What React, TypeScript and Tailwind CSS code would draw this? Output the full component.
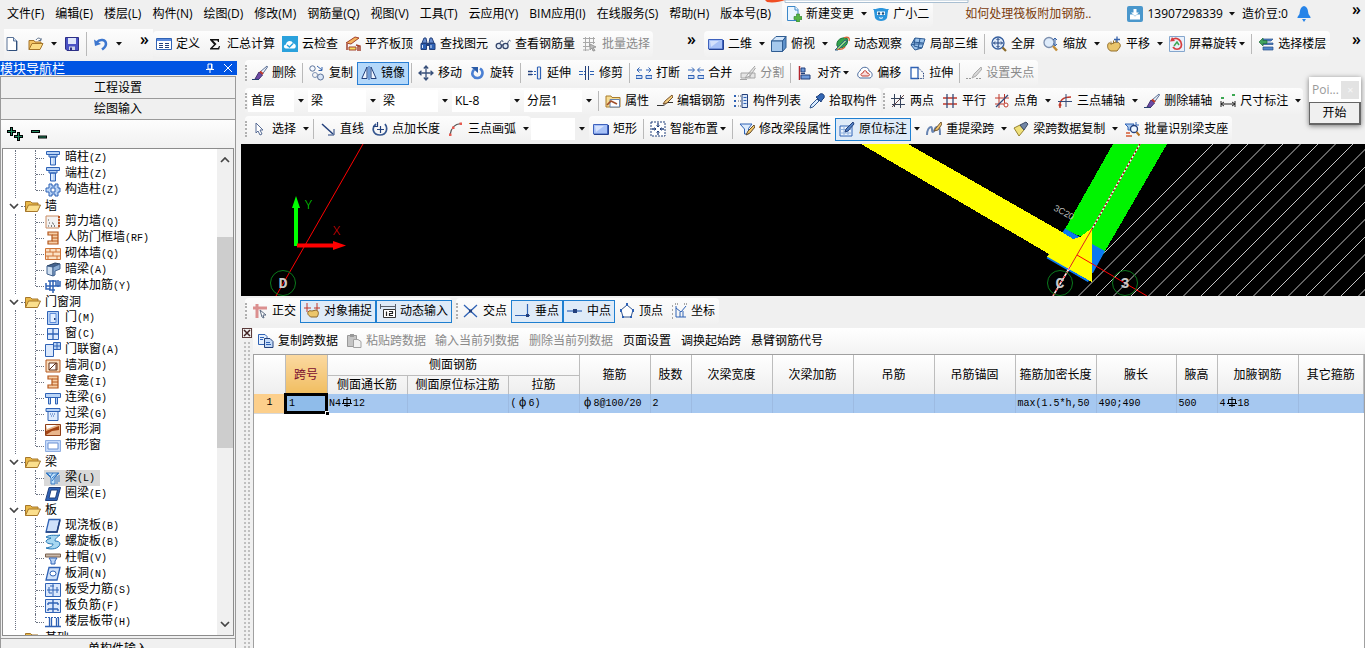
import type { ReactNode } from 'react';
import clsx from 'clsx';

const BLUE = '#2f62b5';
const NAVY = '#23407c';
const LIGHT = '#b9d4f7';
const RED = '#c0392b';

const shapes = {
  file: <><path d="M3 1.500h6.500L13 5v9.500H3z" fill="#fff" stroke="#5b7396" /><path d="M9.500 1.500V5H13" fill="#cfe0f5" stroke="#5b7396" /><path d="M12.500 5v9.500H5" fill="none" stroke="#2f4f7c" /></>,
  open: <><path d="M1 13.500v-9h5l1 1.500h6v2" fill="#f4c566" stroke="#a5752a" /><path d="M1 13.500 4 7.500h11l-3 6z" fill="#fbdc85" stroke="#a5752a" /><path d="M8 4c2-3 4-2 5 0m0-2v2.500h-2.500" fill="none" stroke="#5a6e8a" /></>,
  save: <><path d="M1.500 1.500h13v13H3L1.500 13z" fill="#4a52c4" stroke="#2c2f86" /><path d="M4 2h8v6H4z" fill="#dfe6fa" /><path d="M5 10.500h6V14H5z" fill="#ccd3e8" /><path d="M6 11.500h2V14H6z" fill="#2c2f86" /></>,
  undo: <><path d="M3.500 6.500C7 2.500 13 3.500 13 8c0 3-2 4-4 5.500" fill="none" stroke="#3d77cf" strokeWidth="2.500" /><path d="M1 3.500 2 10l6-2z" fill="#3d77cf" /></>,
  define: <><path d="M.5 2.500h15v11H.5z" fill="#fff" stroke={BLUE} /><path d="M1 3h14v2H1z" fill="#5b8add" /><path d="M3 7.500h4m-4 2h4m-4 2h4M9 7.500h4m-4 2h4m-4 2h4" stroke={NAVY} /></>,
  sigma: <path d="M3 3h9v3h-1l-.7-1.500H6L9.500 8l-4 4H11l1-2h1l-.8 3.500H3v-1L7 8.500 3 4z" fill="#111" />,
  cloudCheck: <><rect width="16" height="16" fill="#2aa1dc" /><path d="M4 12.500c-3-.5-2.500-4 0-4 0-4 6-5 7-1 3-.5 4 4.500 1 5z" fill="#fff" /><path d="m5 9 2.500 2L11 7.500" fill="none" stroke="#2aa1dc" strokeWidth="1.500" /></>,
  slab: <><path d="m1 7 9-6 4 1-8 6z" fill="#f3b25c" stroke="#a3402c" /><path d="M4 11h7v3H4z" fill="#f6dc5c" stroke="#a3402c" /><path d="M2 8v6m9-5 4 1v5m-2-5v5" fill="none" stroke="#a3402c" strokeWidth="1.500" /></>,
  find: <><path d="M2 7 4 2h2l1 5zm7 0 1-5h2l2 5z" fill="#6b8fd0" stroke={NAVY} /><path d="M1 7.500h5.500v6H1zm8.500 0H15v6H9.500z" fill={BLUE} stroke={NAVY} /><path d="M6.500 7h3v3h-3z" fill={NAVY} /><path d="M2.500 9v3m8.500-3v3" stroke="#dfe9fa" /></>,
  glasses: <><circle cx="3.800" cy="10" r="2.600" fill="#e2ebf6" stroke="#33446a" strokeWidth="1.300" /><circle cx="10.500" cy="10" r="2.600" fill="#e2ebf6" stroke="#33446a" strokeWidth="1.300" /><path d="M6 9h2M5 7c1-3 3-3 3-1m4.500 2C13 6 14 3 15.500 5" fill="none" stroke="#33446a" /></>,
  batch: <><path d="M1 2.500h12M1 6.500h12M1 10.500h8M1 14h6M3.500 1v14M7.500 1v10M11.500 1v7" stroke="#a9a9a9" /><path d="m8 8 6 3-3 .5 2 3-2 .5-1-3-2 2z" fill="#bdbdbd" stroke="#999" /></>,
  rect: <><path d="M.5 3.500h14v9.500H.5z" fill="#a7c1f7" stroke="#3f62bd" /><path d="M1 13.500h14.500V4" fill="none" stroke="#244191" /><path d="M2 5h9L3 11z" fill="#d4e1fc" /></>,
  cube: <><path d="M.5 5 5 .5h10L11.500 5z" fill="#d5e7fa" stroke="#2f5c92" /><path d="M.5 5h11v10.500H.5z" fill="#a5c8ec" stroke="#2f5c92" /><path d="M11.500 5 15 .5v11l-3.500 4z" fill="#5d90c9" stroke="#2f5c92" /></>,
  orbit: <><path d="M3 10C2 4 7 1 13 2c2 6-2 10-7 10z" fill="#35a34d" stroke="#19733a" /><path d="M1 14 11 4l2 1-9 9z" fill="#8fdc78" stroke="#2e5e88" /><path d="M10 2c4-2 6 0 5 3M3 13c3 1 6 0 8-2" fill="none" stroke="#db6436" strokeWidth="1.300" /></>,
  local3d: <><path d="m1 9 4-7 10 1-3 9-7 2z" fill="#9bc3ec" stroke="#2b5992" /><path d="m3 6 10 1M5 2l-1 8 8 2M10 2.500 8 13M1 9l4-1 8 0" fill="none" stroke="#2b5992" /></>,
  full: <><circle cx="7" cy="7" r="6" fill="#dfecfb" stroke="#365e9e" strokeWidth="1.300" /><path d="M7 2.500v9M2.500 7h9M5.500 4 7 2.500 8.500 4m-3 6L7 11.500 8.500 10M4 5.500 2.500 7 4 8.500m6-3L11.500 7 10 8.500" fill="none" stroke="#1d3f7c" /><path d="m11.500 11.500 3.500 3.500" stroke="#8a6a2b" strokeWidth="2.200" /></>,
  zoom: <><circle cx="6" cy="6.500" r="5" fill="#deebfa" stroke="#7c8fae" strokeWidth="1.300" /><path d="m10 10 4 4.500" stroke="#c28c36" strokeWidth="2.500" /><path d="M12 2v5m-2-3 2-2 2 2m-2 3v2m-1.500-1.500L12 10l2-2" fill="none" stroke="#3462a8" /></>,
  pan: <><path d="M2 8c1-2 2-1 3 0l5-2c3 0 5 2 4 5l-3 4H5c-3-1-4-4-3-7z" fill="#eac56b" stroke="#94702e" /><path d="M5 8.500v-3m2.500 2v-3m2.500 2V4" stroke="#94702e" /><path d="M11 .5v6M8 3.500h6" stroke="#3763ab" strokeWidth="1.300" /></>,
  rotateScreen: <><path d="M.5.500h15v15H.5z" fill="#e9f0fa" stroke="#84a6cd" /><path d="M3 4c5-4 11 1 9 7-2 3-6 3-8 0" fill="none" stroke="#d73c3c" strokeWidth="1.700" /><path d="M1 5.500 3 1l3 4z" fill="#d73c3c" /><path d="m5 10 3-4 2 3" fill="none" stroke="#3ba751" strokeWidth="1.500" /></>,
  floors: <><path d="M5 3h10l-2 2H4zm0 4h10v1.500H5zm0 4h10v3H5z" fill="#5286c9" stroke="#274d87" strokeWidth=".7" /><path d="m1 6 4-4v2.500h4v3H5V10z" fill="#41a35d" stroke="#1e6c3a" strokeWidth=".7" /></>,
  brush: <><path d="M15 1 8 7l2.500 2L15.500 2z" fill="#eef2f8" stroke="#5a6f95" /><path d="m7 7 3.500 3-4 4.500L3 14z" fill="#6d4aa6" stroke="#41306f" /><path d="m8 6.500 3 2.500" stroke="#c0392b" strokeWidth="2" /><path d="M0 14.500h7" stroke="#28406f" /></>,
  copy: <><circle cx="3.500" cy="3.500" r="2.700" fill="#f5f9ff" stroke="#5c7298" /><circle cx="11.500" cy="12" r="3" fill="#dae6f7" stroke="#5c7298" /><circle cx="6" cy="10" r="2.500" fill="none" stroke="#7f93b5" /><path d="m8 1 5 4M13 2v3.500H9.500" fill="none" stroke="#3463ad" /></>,
  mirror: <><path d="M6 2v11.500H.8zM10 2v11.500h5.200z" fill="#eef5ff" stroke={NAVY} /><path d="M8 1v14" stroke={BLUE} /></>,
  move: <path d="M8 1v14M1 8h14M5.800 3.500 8 1l2.200 2.500m-4.400 9L8 15l2.200-2.500m-6.700-6.700L1 8l2.500 2.200m9-4.400L15 8l-2.500 2.200" fill="none" stroke="#38507a" strokeWidth="1.300" />,
  rotate: <><path d="M4 4.500c-4 5 0 9 4 8.500 5-.5 6-7 2-9.500" fill="none" stroke="#4a7fd3" strokeWidth="2.600" /><path d="M1 2h7v6z" fill="#2a5ca8" /></>,
  extend: <><path d="M1 6.500h8m-8 3h8" stroke={BLUE} strokeDasharray="2 1" /><path d="M1 6.500h4m-4 3h4" stroke={NAVY} strokeWidth="1.500" /><path d="M10.500 2v12m3-12v12m-3-12h3m-3 12h3" stroke={BLUE} strokeWidth="1.200" /></>,
  trim: <><path d="M0 6.500h6M0 9.500h6m5-3h5m-5 3h5" stroke={BLUE} strokeDasharray="4 1" /><path d="M6.500 1v14m3-14v14" stroke={NAVY} /></>,
  breakLine: <><path d="M0 10.500h6v3H0zm10 0h6v3h-6z" fill="#cfdef5" stroke={BLUE} /><path d="M1 5h5m4 0h5M3.500 2.500 1 5l2.500 2.500m9-5L15 5l-2.500 2.500" fill="none" stroke={BLUE} /></>,
  merge: <><path d="M0 10.500h6v3H0zm10 0h6v3h-6z" fill="#cfdef5" stroke={BLUE} /><path d="M0 5h6m4 0h6M4 2.500 6.500 5 4 7.500m8-5L9.500 5 12 7.500" fill="none" stroke={BLUE} /></>,
  split: <path d="M1 8h9v5H1zM15 1 8 9l-3 4 5-2 5.500-8M10 8h5v5h-5M0 14.500h7" fill="#e5e5e5" stroke="#a5a5a5" />,
  align: <><path d="M2.500 1v14" stroke="#b3262d" strokeWidth="1.500" /><path d="M4 3h4v4H4zm0 7h9v4H4z" fill="#6f9ada" stroke={NAVY} /><path d="M8 8.500H4" stroke={NAVY} /></>,
  offset: <><path d="M3 13c-4-2-2-6 0-7 1-5 9-5 9 0 4 1 4 6 1 7z" fill="#fff" stroke="#496a9d" /><path d="M5 11c-2-1-1-3 1-3 0-3 4-3 4 0 3 0 3 3 1 3z" fill="#f8dddd" stroke={RED} /></>,
  stretch: <><path d="M2 2.500h7v11H2z" fill="#fff" stroke={BLUE} strokeWidth="1.300" /><path d="M9 2.500 14.500 8v5.500H9" fill="none" stroke={NAVY} strokeDasharray="1.500 1" /></>,
  grip: <><path d="M15 2 8 9l-2 4 4-2 6-7z" fill="#d7d7d7" stroke="#aaa" /><path d="M0 13.500h6m4 0h5" stroke="#999" strokeDasharray="2 1" /></>,
  property: <><path d="M1 3h5l1 1.500h8V14H1z" fill="#f7dc91" stroke="#a87b2b" /><path d="M5 6.500h9.500V14H5z" fill="#fff" stroke="#6583ad" /><path d="m2 12 4-4 6 3" fill="none" stroke="#a04e2a" strokeWidth="1.700" /></>,
  editRebar: <><path d="M0 12.500h6c2 0 3-3 5-3h5" fill="none" stroke="#333" /><path d="M15 2 8 8l-2 3 4-1 6-6z" fill="#f4cf82" stroke="#76512b" /></>,
  list: <><path d="M1 2h2v2H1zm0 5h2v2H1zm0 5h2v2H1z" fill={BLUE} /><path d="M5 3h3M5 8h3m-3 5h3" stroke="#555" strokeDasharray="1 1" /><path d="M9 1.500h5.500v13H9z" fill="#dce8f9" stroke={NAVY} /><path d="M10.500 4.500h3m-3 3h3m-3 3h3" stroke={BLUE} /></>,
  picker: <><path d="m1 15 1-3 6-6 2 2-6 6z" fill="#d9ebff" stroke="#30588f" /><path d="m7 4 5 5 1-2 2-2c1-3-1-5-4-4L9 3z" fill="#3467b4" stroke="#1f407b" /></>,
  twoPoint: <><path d="M4.500 1v13M10.500 2v13M1 5.500h13M2 11.500h13" stroke="#35435c" /><path d="m2 14 12-12" stroke="#6b4a4a" /></>,
  parallel: <><path d="M1 5h14M1 11h14" stroke={RED} strokeWidth="1.300" /><path d="M5 1v14M11 1v14" stroke="#354b78" strokeWidth="1.300" /></>,
  angle: <><path d="M5 1v14M10.500 1v9M1 5h14M1 11h9" stroke={RED} /><path d="m2 14 12-12" stroke="#354b78" strokeWidth="1.300" /><circle cx="12" cy="12" r="2" fill="#fff" stroke={RED} /></>,
  arcAxis: <><path d="M3 15C2 7 6 4 14 4" fill="none" stroke={RED} strokeWidth="1.500" /><path d="M9 1v13M1 8.500h14" stroke="#354b78" /><circle cx="3" cy="12" r="1.500" fill={RED} /></>,
  dimension: <><path d="M1 8v6m14-6v6M1 11h14M4 9l-3 2 3 2m8-4 3 2-3 2" fill="none" stroke="#222" /><path d="M1 5h3m8-3h3" stroke="#3ba751" strokeWidth="2" /></>,
  cursor: <path d="m4 2 7 7H8l2 4-2 1-2-4-2 2z" fill="#fff" stroke="#566b94" />,
  line: <><path d="m2 3 11 10" stroke={NAVY} strokeWidth="1.500" /><path d="M14 8v6H8" fill="none" stroke={NAVY} /></>,
  pointLen: <><path d="M4 3c-5 4-3 11 4 11 7 0 8-7 5-11" fill="none" stroke="#35568f" strokeWidth="1.700" /><path d="M5.500 1v4.500H1M8.500 5v7M5 8.500h7" fill="none" stroke={NAVY} strokeWidth="1.200" /></>,
  arc: <><path d="M2 14C3 6 7 3 13 2.500" fill="none" stroke="#555" strokeWidth="1.200" /><path d="M1 12.500h2.500V15H1zm3-7h2.500V8H4zm7.500-4H14V4h-2.500z" fill="#e65a50" /></>,
  smart: <><path d="M1 1h14v14H1z" fill="#fff" stroke={NAVY} strokeDasharray="2 1" /><path d="M8 2v4m0 4v4M2 8h4m4 0h4" fill="none" stroke={NAVY} strokeWidth="1.300" /><path d="M6.500 4.500 8 6l1.500-1.500m-3 7L8 10l1.500 1.500m-5-5L6 8 4.500 9.500m7-3L10 8l1.500 1.500" fill="none" stroke={NAVY} /></>,
  beamEdit: <><path d="M1 3h12L9.500 7.500V13h-4V8z" fill="#dcebfc" stroke={BLUE} /><path d="M15 4 9 10l-2 4 4-2 5-6z" fill="#f3c86a" stroke="#614a2b" /></>,
  insitu: <><path d="M1 5h12v10H1z" fill="#e9f2fd" stroke={BLUE} /><path d="M1 8.500h12M1 12h12M5 5v10M9 5v10" stroke="#8fb0de" /><path d="M14 1 7 8l-1 3 3-1 6-7z" fill="#5382c4" stroke={NAVY} /></>,
  respan: <><path d="M1 14c0-5 2-8 4-8s0 5 2 5 1-5 4-5 3 3 3 8" fill="none" stroke="#6784b2" strokeWidth="2" /><path d="m15 1-5 6-2 3 4-1 4-6z" fill="#f0c36a" stroke="#735731" /></>,
  dataCopy: <><path d="M1 7 7 4l4 5-5 6z" fill="#efe07a" stroke="#968330" /><path d="m7 4 6-3 2 2-4 6z" fill="#7387a7" stroke="#3e4c66" /></>,
  identify: <><path d="M1 3h9l-2 3v3H4V6z" fill="#a9c8ef" stroke={BLUE} /><circle cx="10" cy="8" r="3.500" fill="#eef6ff" stroke={NAVY} strokeWidth="1.300" /><path d="m12.500 11 3 3.500" stroke="#b7731f" strokeWidth="2" /><path d="M2 12h4m-4 3h6" stroke="#d35a32" strokeWidth="1.700" /><path d="M12 1v3h3" fill="none" stroke={BLUE} /></>,
  newChange: <><path d="M1.500.500H9l3 3v11H1.500z" fill="#e9f5ff" stroke="#3b87c8" /><path d="M9 .500V4h3" fill="#fff" stroke="#3b87c8" /><path d="M10.500 8h3v2.500H16v3h-2.500V16h-3v-2.500H8v-3h2.500z" fill="#55b544" stroke="#2c7d26" strokeWidth=".6" /></>,
  mascot: <><path d="M1 5c1-4 13-4 14 0l-1 7c-2 4-10 4-12 0z" fill="#2b95dc" /><path d="M4 5.500h8v3.500H4z" fill="#fff" /><circle cx="6" cy="7.500" r="1.200" fill="#174c7f" /><circle cx="10" cy="7.500" r="1.200" fill="#174c7f" /><path d="M6 11.500c1 1 3 1 4 0" fill="none" stroke="#fff" /><path d="M2 6 0 3l3 0m11 3 2-3-3 0" fill="#2b95dc" /></>,
  user: <><rect width="16" height="16" rx="2" fill="#4a97cc" /><path d="M3 8.500h3l2 2 2-2h3v5H3z" fill="#fff" /><path d="M6.500 3h3v3.500H12L8 10 4 6.500h2.500z" fill="#fff" /></>,
  bell: <><path d="M8 0c4 1 4 5 4.500 8l2 3v1h-13v-1l2-3C4 5 4 1 8 0z" fill="#2784e8" /><path d="M6 13h4l-2 3z" fill="#2784e8" /></>,
  ortho: <><path d="M5 15V1M1 5h14" stroke="#db8f8f" strokeWidth="3" /><path d="m8 7 6 5H11l1 3-2-1z" fill="#fff" stroke="#5d6c83" /></>,
  snap: <><path d="M3 0v9M0 5h7m6-5v9m-3-4h6" stroke={RED} /><path d="M4 9c1-2 3-1 4-1l4-1c3 1 3 4 1 7H7c-2-1-4-3-3-5z" fill="#ecc66b" stroke="#8d682c" /></>,
  dynInput: <><path d="M0 3.500h16M.5 1v5m15-5v5" stroke="#59616e" /><path d="M3.500 6.500h12v8h-12z" fill="#fff" stroke="#333" /><path d="M6.500 8.500v4.500m2.500-4.500h3.500v2H9.500v2H13" fill="none" stroke="#222" strokeWidth="1.200" /></>,
  cross: <><path d="m1 2 13 12M14 2 1 14" stroke={BLUE} strokeWidth="1.300" /><path d="M6 6.500h3v3H6z" fill={NAVY} /></>,
  perp: <><path d="M0 12.500h15M12.500 1v12" stroke={BLUE} strokeWidth="1.200" /><path d="M11 11h3v3h-3z" fill={NAVY} /></>,
  mid: <><path d="M0 8h15" stroke={BLUE} strokeWidth="1.200" /><path d="M6 6h4v4H6z" fill={NAVY} /></>,
  vertex: <><path d="m8 2 6 5-2 7H4L2 7z" fill="#fff" stroke="#35568f" /><path d="M7 0h2v3H7zM1 6h2v3H1zm12 0h2v3h-2zM3 13h2v2H3zm8 0h2v2h-2z" fill={BLUE} /></>,
  coord: <><path d="M5 3v11h10M5 5l5 4 5-6M9 9v5m3-6v6" fill="none" stroke={BLUE} /><path d="M1 3h2m-2 4h2m-2 4h2m-2 4h2M4 1h3m6 0h3" stroke="#555" strokeDasharray="1 1" /></>,
  copyData: <><path d="M.5 1.500H7l2 2v8H.5z" fill="#e5effc" stroke={BLUE} /><path d="M6.500 5.500H12l3 3v6H6.500z" fill="#c5dbf8" stroke={NAVY} /><path d="M8 9.500h4m-4 2h5M2 4.500h4m-4 2h3" stroke={BLUE} /></>,
  paste: <><path d="M1.500 2.500h9v11h-9z" fill="#c5c5c5" stroke="#999" /><path d="M4 1h4v3H4z" fill="#999" /><path d="M7.500 6.500H12l3 2v6H7.500z" fill="#f1f1f1" stroke="#a2a2a2" /></>,
  folder: <><path d="M.5 13.500V3.500h5L7 5h6v2" fill="#e9b949" stroke="#a6772a" /><path d="M.5 13.500 3.500 7H15.500l-3 6.500z" fill="#fbdf8d" stroke="#a6772a" /></>,
  column: <><path d="M1.500 1.500h13v3h-13zM4 4.500h8V7H4zM5.500 7h5v8h-5z" fill={LIGHT} stroke={BLUE} /><path d="M7 8v6" stroke="#fff" /></>,
  structCol: <><path d="M4 2h3v2h3V2h3v4h2v4h-2v4h-3v-2H7v2H4v-4H1V6h3z" fill={LIGHT} stroke={BLUE} /><path d="M6 6h4v4H6z" fill="#fff" stroke={BLUE} /></>,
  shearWall: <><path d="M1 2h13v12H1z" fill="#f2f2f2" stroke="#ca8c62" /><path d="M3 12h9M4 9h4M3 6h1m4 4h2M6 12h5" stroke="#555" strokeDasharray="1 2" /><path d="M14 2v12" stroke="#b75425" strokeDasharray="2 1" strokeWidth="2" /></>,
  niche: <><path d="M3 2h10v12H3v-3h4V5H3z" fill="#f7cfa7" stroke="#b4581f" strokeWidth="1.200" /><path d="M7 5h6M7 8h6m-6 3h6" stroke="#b4581f" /></>,
  brick: <><path d="M.5 2.500h15v11H.5z" fill="#fbe2c6" stroke="#ce7438" /><path d="M1 6h14M1 10h14M5 2.500V6m6-3.500V6M8 6v4m-5 0v3.500M12 10v3.500" stroke="#ce7438" /></>,
  hiddenBeam: <><path d="m2 4 8-3 5 1-7 3z" fill="#46648f" stroke="#29415e" /><path d="m2 4 6 1v9l-6-2z" fill="#cfdff0" stroke="#40618d" /><path d="m8 5 7-3v5l-5 2v4l-2 1z" fill="#8aabd1" stroke="#40618d" /></>,
  wallRebar: <path d="M3 3h8v5H1m14-5v5h-4M4 12h6M5 3v9m3-10v13m5-13v7M1 5v6h4" fill="none" stroke={BLUE} strokeWidth="1.500" />,
  door: <><path d="M2.500 1.500h11v13h-11z" fill={LIGHT} stroke={BLUE} /><path d="M5 3.500h6v9H5z" fill="#e3efff" stroke="#5f8ddb" /><path d="M9 8h1.500v2H9z" fill={NAVY} /></>,
  window: <><path d="M2.500 2.500h11v11h-11z" fill="#dbe9fd" stroke={BLUE} /><path d="M8 2v12M2 8h12" stroke={BLUE} strokeWidth="1.300" /></>,
  doorWindow: <><path d="M.5 2.500h8v12h-8z" fill="#dbe9fd" stroke={BLUE} /><path d="M8.500.500h7v7h-7zM8.500 4h7M12 .500v7" fill={LIGHT} stroke={BLUE} /></>,
  wallHole: <><path d="M1 2h14v12H1z" fill="#f8dcbd" stroke="#b5591e" /><path d="M4 5h8v7H4z" fill="#fff" stroke="#643116" /><path d="m4 12 7-7v7" fill="none" stroke="#643116" /></>,
  linkBeam: <path d="M.5 3.500h15v4h-15zM3.500 7.500h2V14h-2zm7 0h2V14h-2z" fill={LIGHT} stroke={BLUE} />,
  lintel: <><path d="M1 2.500h14v3H1z" fill={LIGHT} stroke={BLUE} /><path d="M3 5.500h10v9H3z" fill="#e0ecfd" stroke={BLUE} /><path d="M5 8h6m-5 2h4" stroke={BLUE} strokeDasharray="1 1" /></>,
  stripHole: <><path d="M.5 2.500h15v11H.5z" fill="#e9b68c" stroke="#8e3e16" /><path d="m1 9 13-5v4L7 9l-6 4z" fill="#a34516" /><path d="M1 3h11L2 7z" fill="#fff" /></>,
  stripWindow: <><path d="M.5 2.500h15v11H.5z" fill="#c5dafa" stroke="#8eaee2" /><path d="M3 5h10v6H3z" fill="#fff" stroke="#6a91d3" /></>,
  beam: <><path d="M1 3h13l-4 4v7H6V8z" fill="#bfe0fa" stroke="#3579c4" /><path d="m2 3 4 4m2-4L5 7m8-4-6 5m3-1-3 4m5-5v8m2-9v7" fill="none" stroke="#3579c4" /></>,
  ringBeam: <><path d="M4 1.500h11.500L12 14.500H.5z" fill={BLUE} stroke={NAVY} /><path d="M6 4h6.500l-2 8H4z" fill="#fff" stroke={NAVY} /></>,
  slabFill: <><path d="M4 1.500h11L12 14H1z" fill="#cfe1fa" stroke={BLUE} strokeWidth="1.300" /><path d="M1 14h11l3-12" fill="none" stroke={NAVY} strokeWidth="1.500" /></>,
  spiral: <path d="M1 3c5-3 10-1 14-2-4 3-5 4-5 6 3 0 5 1 5 3-1 5-9 6-14 4 5-1 7-2 7-4-4 0-7-1-7-3 1-2 4-2 5-3-2 0-4 0-5-1z" fill="#a8d8f2" stroke="#2577b5" />,
  cap: <><path d="M.5 4h15v3H.5z" fill="#c9b8a9" stroke="#765e4c" /><path d="M4 8h8l-2 3v3H6v-3z" fill={LIGHT} stroke={BLUE} /></>,
  slabHole: <><path d="M4 1.500h11L12 14H1z" fill="#cfe1fa" stroke={BLUE} strokeWidth="1.300" /><ellipse cx="8" cy="7.500" rx="3" ry="2.500" fill="#fff" stroke={BLUE} /></>,
  slabRebar: <><path d="M.5 1.500h15v13H.5z" fill="#dbe8fc" stroke={BLUE} /><path d="M2 8h12M8 2v12M4 5v6h3m5-6v6M5 4h4" fill="none" stroke={BLUE} /></>,
  negRebar: <><path d="M.5 1.500h15v13H.5z" fill="#dbe8fc" stroke={BLUE} /><path d="M3 5h10M3 11h10M8 2v12M3 5v2m10-2v2M3 11v2m10-2v2" stroke={BLUE} strokeWidth="1.400" /></>,
  strip: <><path d="M0 3.500h16" stroke={BLUE} strokeDasharray="2 1" /><path d="M0 12.500h16M4.500 4v9m2-9v9m5-9v9m2-9v9" stroke={BLUE} strokeWidth="1.300" /></>,
};

type IconName = keyof typeof shapes;

function Icon({ name }: { name: IconName }) {
  return (
    <svg viewBox="0 0 16 16" className="size-4 shrink-0" aria-hidden="true">
      {shapes[name]}
    </svg>
  );
}

function Caret() {
  return (
    <svg viewBox="0 0 6 4" className="h-1 w-1.5 shrink-0" aria-hidden="true">
      <path d="M0 0h6L3 3.500z" fill="#111" />
    </svg>
  );
}

interface Tool {
  label?: string;
  icon?: IconName;
  split?: boolean; // separate arrow button after the main one
  menu?: boolean; // arrow inside the button
  active?: 'solid' | 'soft';
  disabled?: boolean;
  sep?: boolean;
}

const SEP: Tool = { sep: true };

function ToolItem({ tool, dense }: { tool: Tool; dense?: boolean }) {
  if (tool.sep) return <span className="mx-0.5 h-5 w-px shrink-0 bg-[#b9b9b9]" />;
  return (
    <>
      <button
        type="button"
        disabled={tool.disabled}
        className={clsx(
          'flex h-[23px] shrink-0 items-center gap-1 border px-[3px] whitespace-nowrap',
          dense && 'border-x-0',
          tool.active === 'solid' && 'border-[#2a7fd4] bg-[#b4d8fa]',
          tool.active === 'soft' && 'border-[#1f7fd0] bg-[#dfebf8]',
          !tool.active && 'border-transparent hover:bg-[#dceafa]',
          tool.disabled ? 'text-[#8a8a8a]' : 'text-black'
        )}
      >
        {tool.icon && <Icon name={tool.icon} />}
        <span className="flex items-center">
          {tool.label}
          {tool.menu && <span className="flex w-2 justify-end"><Caret /></span>}
        </span>
      </button>
      {tool.split && (
        <button type="button" aria-label={`${tool.label} 选项`} className="flex h-5 w-[11px] shrink-0 items-center justify-center">
          <Caret />
        </button>
      )}
    </>
  );
}

function Grip() {
  return <span className="h-4 w-[3px] shrink-0 border-l-2 border-dotted border-[#b0b0b0]" />;
}

function Toolbar({ tools, grip = true, dense, children }: { tools: Tool[]; grip?: boolean; dense?: boolean; children?: ReactNode }) {
  return (
    <div
      role="toolbar"
      className={clsx('flex h-[26px] items-center rounded-sm bg-linear-to-b from-[#fdfdfd] to-[#f1f1f1]', dense && 'gap-px')}
    >
      {grip && <Grip />}
      {children}
      {tools.map((tool, i) => (
        <ToolItem key={i} tool={tool} dense={dense} />
      ))}
    </div>
  );
}

function Combo({ label, value, width }: { label: string; value: string; width: string }) {
  return (
    <label className={clsx('flex h-[22px] shrink-0 items-center', width)}>
      <select aria-label={label} defaultValue={value} className="h-full min-w-0 flex-1 appearance-none bg-white pl-[3px] outline-none">
        <option>{value}</option>
      </select>
      <span className="flex w-3.5 justify-center"><Caret /></span>
    </label>
  );
}

const menus = ['文件(F)', '编辑(E)', '楼层(L)', '构件(N)', '绘图(D)', '修改(M)', '钢筋量(Q)', '视图(V)', '工具(T)', '云应用(Y)', 'BIM应用(I)', '在线服务(S)', '帮助(H)', '版本号(B)'];

const mainTools: Tool[] = [
  { label: '定义', icon: 'define' },
  { label: '汇总计算', icon: 'sigma' },
  { label: '云检查', icon: 'cloudCheck' },
  { label: '平齐板顶', icon: 'slab' },
  { label: '查找图元', icon: 'find' },
  { label: '查看钢筋量', icon: 'glasses' },
  { label: '批量选择', icon: 'batch', disabled: true },
];

const viewTools: Tool[] = [
  { label: '二维', icon: 'rect', split: true },
  { label: '俯视', icon: 'cube', split: true },
  { label: '动态观察', icon: 'orbit' },
  { label: '局部三维', icon: 'local3d' },
  SEP,
  { label: '全屏', icon: 'full' },
  { label: '缩放', icon: 'zoom', split: true },
  { label: '平移', icon: 'pan', split: true },
  { label: '屏幕旋转', icon: 'rotateScreen', menu: true },
  SEP,
  { label: '选择楼层', icon: 'floors' },
];

const editTools: Tool[] = [
  { label: '删除', icon: 'brush' },
  SEP,
  { label: '复制', icon: 'copy' },
  { label: '镜像', icon: 'mirror', active: 'solid' },
  SEP,
  { label: '移动', icon: 'move' },
  { label: '旋转', icon: 'rotate' },
  SEP,
  { label: '延伸', icon: 'extend' },
  { label: '修剪', icon: 'trim' },
  SEP,
  { label: '打断', icon: 'breakLine' },
  { label: '合并', icon: 'merge' },
  { label: '分割', icon: 'split', disabled: true },
  SEP,
  { label: '对齐', icon: 'align', menu: true },
  { label: '偏移', icon: 'offset' },
  { label: '拉伸', icon: 'stretch' },
  SEP,
  { label: '设置夹点', icon: 'grip', disabled: true },
];

const memberTools: Tool[] = [
  SEP,
  { label: '属性', icon: 'property' },
  { label: '编辑钢筋', icon: 'editRebar' },
  { label: '构件列表', icon: 'list' },
  { label: '拾取构件', icon: 'picker' },
];

const axisTools: Tool[] = [
  { label: '两点', icon: 'twoPoint' },
  { label: '平行', icon: 'parallel' },
  { label: '点角', icon: 'angle', split: true },
  { label: '三点辅轴', icon: 'arcAxis', split: true },
  { label: '删除辅轴', icon: 'brush' },
  { label: '尺寸标注', icon: 'dimension', split: true },
];

const drawTools: Tool[] = [
  { label: '选择', icon: 'cursor', split: true },
  SEP,
  { label: '直线', icon: 'line' },
  { label: '点加长度', icon: 'pointLen' },
  { label: '三点画弧', icon: 'arc', split: true },
];

const beamTools: Tool[] = [
  { label: '矩形', icon: 'rect' },
  SEP,
  { label: '智能布置', icon: 'smart', menu: true },
  SEP,
  { label: '修改梁段属性', icon: 'beamEdit' },
  { label: '原位标注', icon: 'insitu', active: 'soft', split: true },
  { label: '重提梁跨', icon: 'respan', split: true },
  { label: '梁跨数据复制', icon: 'dataCopy', split: true },
  { label: '批量识别梁支座', icon: 'identify' },
];

const snapModes: Tool[] = [
  { label: '正交', icon: 'ortho' },
  { label: '对象捕捉', icon: 'snap', active: 'soft' },
  { label: '动态输入', icon: 'dynInput', active: 'soft' },
];

const snapPoints: Tool[] = [
  { label: '交点', icon: 'cross' },
  { label: '垂点', icon: 'perp', active: 'soft' },
  { label: '中点', icon: 'mid', active: 'soft' },
  { label: '顶点', icon: 'vertex' },
  { label: '坐标', icon: 'coord' },
];

interface TreeGroup {
  name?: string;
  items: [string, string, IconName][];
}

const tree: TreeGroup[] = [
  { items: [['暗柱', '(Z)', 'column'], ['端柱', '(Z)', 'column'], ['构造柱', '(Z)', 'structCol']] },
  { name: '墙', items: [['剪力墙', '(Q)', 'shearWall'], ['人防门框墙', '(RF)', 'niche'], ['砌体墙', '(Q)', 'brick'], ['暗梁', '(A)', 'hiddenBeam'], ['砌体加筋', '(Y)', 'wallRebar']] },
  { name: '门窗洞', items: [['门', '(M)', 'door'], ['窗', '(C)', 'window'], ['门联窗', '(A)', 'doorWindow'], ['墙洞', '(D)', 'wallHole'], ['壁龛', '(I)', 'niche'], ['连梁', '(G)', 'linkBeam'], ['过梁', '(G)', 'lintel'], ['带形洞', '', 'stripHole'], ['带形窗', '', 'stripWindow']] },
  { name: '梁', items: [['梁', '(L)', 'beam'], ['圈梁', '(E)', 'ringBeam']] },
  { name: '板', items: [['现浇板', '(B)', 'slabFill'], ['螺旋板', '(B)', 'spiral'], ['柱帽', '(V)', 'cap'], ['板洞', '(N)', 'slabHole'], ['板受力筋', '(S)', 'slabRebar'], ['板负筋', '(F)', 'negRebar'], ['楼层板带', '(H)', 'strip']] },
  { name: '基础', items: [] },
];

function Chevron({ up }: { up?: boolean }) {
  return (
    <svg viewBox="0 0 10 6" className="h-1.5 w-2.5 shrink-0" aria-hidden="true">
      <path d={up ? 'M1 5 5 1l4 4' : 'M1 1l4 4 4-4'} fill="none" stroke="#444" strokeWidth="1.700" />
    </svg>
  );
}

function ComponentTree() {
  return (
    <ul className="min-w-0 flex-1 overflow-hidden pt-px">
      {tree.map((group, g) => (
        <li key={g}>
          {group.name && (
            <button type="button" className="flex h-4 items-center pl-1.5">
              <Chevron />
              <span className="ml-0.5 w-1 border-t border-dotted border-gray-500" />
              <Icon name="folder" />
              <span className="pl-1">{group.name}</span>
            </button>
          )}
          <ul className="ml-3 border-l border-dotted border-gray-500 pl-[19px]">
            {group.items.map(([name, key, icon], i) => (
              <li key={name} className="flex h-4">
                <span className={clsx('w-px border-l border-dotted border-gray-500', i === group.items.length - 1 ? 'h-2' : 'h-4')} />
                <span className="mt-2 h-px w-2 border-t border-dotted border-gray-500" />
                <button type="button" className={clsx('flex h-4 items-center gap-1 pr-[5px] pl-px', name === '梁' && 'bg-[#d9d9d9]')}>
                  <Icon name={icon} />
                  <span className="whitespace-nowrap">
                    {name}
                    <span className="font-['Liberation_Mono',monospace] text-[10px]">{key}</span>
                  </span>
                </button>
              </li>
            ))}
          </ul>
        </li>
      ))}
    </ul>
  );
}

function NavPanel() {
  return (
    <aside className="flex w-[241px] shrink-0 flex-col pt-px pr-1">
      <header className="flex h-3.5 shrink-0 items-center bg-[#0054e3] pr-1 text-[13px] leading-none text-white">
        <h2 className="flex-1">模块导航栏</h2>
        <button type="button" aria-label="固定" className="mr-2">
          <svg viewBox="0 0 10 10" className="size-2.5"><path d="M3 1h4v5H3zM1 6.500h8M5 7v3M6.500 1v5" fill="none" stroke="#fff" /></svg>
        </button>
        <button type="button" aria-label="关闭">
          <svg viewBox="0 0 10 10" className="size-2.5"><path d="m1 1 8 8M9 1 1 9" stroke="#fff" /></svg>
        </button>
      </header>
      <div className="mt-px mr-px flex min-h-0 flex-1 flex-col border-r border-l border-[#9a9a9a]">
        <button type="button" className="h-[22px] shrink-0 border-t border-[#9a9a9a]">工程设置</button>
        <button type="button" className="h-[22px] shrink-0 border-y border-[#9a9a9a]">绘图输入</button>
        <div className="flex h-7 shrink-0 items-center gap-2 bg-linear-to-b from-[#fdfdfd] to-[#f1f1f1] pl-1.5">
          <button type="button" aria-label="展开全部">
            <svg viewBox="0 0 16 14" className="h-3.5 w-4">
              <path d="M4.500 0v9M0 4.500h9M11.500 5v9M7 9.500h9" stroke="#000" strokeWidth="3" />
              <path d="M4.500 1v7M1 4.500h7M11.500 6v7M8 9.500h7" stroke="#248a62" />
            </svg>
          </button>
          <button type="button" aria-label="折叠全部">
            <svg viewBox="0 0 16 14" className="h-3.5 w-4">
              <path d="M0 4.500h9M7 10h9" stroke="#000" strokeWidth="3" />
              <path d="M1 4.500h7M8 10h7" stroke="#248a62" />
            </svg>
          </button>
        </div>
        <div className="mx-px flex min-h-0 flex-1 border border-[#8c8c8c] bg-white">
          <ComponentTree />
          <div className="flex w-4 shrink-0 flex-col items-center bg-[#f0f0f0]">
            <span className="flex h-[88px] shrink-0 items-start pt-2"><Chevron up /></span>
            <span className="h-[211px] w-full bg-[#cdcdcd]" />
            <span className="mt-auto pb-2"><Chevron /></span>
          </div>
        </div>
        <button type="button" className="mt-0.5 h-2.5 shrink-0 overflow-hidden border-t border-[#9a9a9a] pt-0.5 leading-4">
          <span className="block h-4">单构件输入</span>
        </button>
      </div>
    </aside>
  );
}

const hatch = Array.from({ length: 40 }, (_, i) => 1357 + i * 17.5);

function ModelCanvas() {
  return (
    <svg viewBox="241 144 1124 152" preserveAspectRatio="xMinYMin slice" className="h-[152px] w-full shrink-0 bg-black">
      <clipPath id="slabArea">
        <path d="M1167 144h900v152h-1004l31-24 11-21z" />
      </clipPath>
      <g clipPath="url(#slabArea)" stroke="#c4c4c4" strokeWidth="1">
        {hatch.map((s) => (
          <path key={s} d={`M${s - 144} 144L${s - 296} 296`} />
        ))}
      </g>
      <path d="M363 144 276 296" stroke="#f00" />
      <path d="M1113 144h54l-62 107-13 22h-4v-33l-23-11z" fill="#00f400" shapeRendering="crispEdges" />
      <path d="M1065 228.500 1080 237l-6 5-12-9zM1092 244l13 7-12 22h-1zM1047 257l41 25 2-3-41-25z" fill="#0a78f0" />
      <path d="M861 144h47l154 88 11 7 7-2 12-9v54l-45-25 2-3z" fill="#ff0" shapeRendering="crispEdges" />
      <path d="m1047 257.500 41 23.500" stroke="#0a78f0" strokeWidth="1.500" />
      <path d="m1140 144-48 85" stroke="#fff" strokeWidth="1.500" />
      <path d="m1140 144-48 85" stroke="#900" strokeDasharray="2 2" strokeWidth="1.500" />
      <path d="m1092 229-22 38" stroke="#d22" />
      <path d="m1070 267-17 29" stroke="#fff" strokeWidth="1.500" />
      <path d="m1070 267-17 29" stroke="#f00" strokeDasharray="3 2" />
      <path d="m1077 255 70 41" stroke="#f00" />
      <g fill="none" stroke="#0a7a1c">
        <circle cx="283" cy="283" r="12.500" />
        <circle cx="1060" cy="283" r="12.500" />
        <circle cx="1125" cy="283" r="12.500" />
      </g>
      <g fill="#c8c8c8" fontFamily="Liberation Mono, monospace" fontWeight="700" fontSize="15" textAnchor="middle">
        <text x="283" y="288">D</text>
        <text x="1060" y="288">C</text>
        <text x="1125" y="288">3</text>
      </g>
      <text x="1053" y="210" fill="#bbb" fontFamily="Liberation Sans, sans-serif" fontSize="9" transform="rotate(28 1053 210)">3C20</text>
      <path d="M296 246v-42" stroke="#0f0" strokeWidth="4" />
      <path d="m292 208 4-12 4 12z" fill="#0f0" />
      <path d="M297 245.500h38" stroke="#f00" strokeWidth="4" />
      <path d="m333 241 13 4.500-13 4.500z" fill="#f00" />
      <g fontFamily="Open Sans, sans-serif" fontWeight="300" fontSize="13">
        <text x="305" y="209" fill="#0e0">Y</text>
        <text x="333" y="235" fill="#e00">X</text>
      </g>
    </svg>
  );
}

// HRB400 bar symbol
function BarMark() {
  return (
    <svg viewBox="0 0 12 12" className="inline size-3 align-[-2px]" role="img" aria-label="HRB400">
      <path d="M2.500 3.500h7v4h-7zM6 1v10M1 7.500h10M3 9.500h6" fill="none" stroke="#000" />
    </svg>
  );
}

const columns = ['箍筋', '肢数', '次梁宽度', '次梁加筋', '吊筋', '吊筋锚固', '箍筋加密长度', '腋长', '腋高', '加腋钢筋', '其它箍筋'];
const cells: ReactNode[] = [
  <>N4<BarMark />12</>,
  '',
  <>(<span className="inline-block w-3 text-center text-xs leading-3">ф</span>6)</>,
  <><span className="inline-block w-3 text-center text-xs leading-3">ф</span>8@100/20</>,
  '2', '', '', '', '',
  'max(1.5*h,50',
  '490;490',
  '500',
  <>4<BarMark />18</>,
  '',
];

function SpanTable() {
  const head = 'overflow-hidden border-r border-[#bdbdbd] p-0 text-center font-normal whitespace-nowrap';
  return (
    <table className="w-full table-fixed border-collapse">
      <colgroup>
        <col className="w-[31px]" />
        <col className="w-[42px]" />
        <col className="w-20" />
        <col className="w-[101px]" />
        <col className="w-[71px]" />
        <col className="w-[71px]" />
        <col className="w-[41px]" />
        <col className="w-[81px]" />
        <col className="w-[81px]" />
        <col className="w-[81px]" />
        <col className="w-[81px]" />
        <col className="w-[81px]" />
        <col className="w-20" />
        <col className="w-[41px]" />
        <col className="w-[81px]" />
        <col />
      </colgroup>
      <thead className="bg-linear-to-b from-white to-[#eeeeee]">
        <tr className="h-5">
          <th rowSpan={2} className={head} />
          <th rowSpan={2} className={clsx(head, 'bg-linear-to-b from-[#fbd9a0] to-[#f0bd5e] text-[#7a0d2e]')}>跨号</th>
          <th colSpan={3} className={clsx(head, 'border-b')}>侧面钢筋</th>
          {columns.map((name) => (
            <th key={name} rowSpan={2} className={head}>{name}</th>
          ))}
        </tr>
        <tr className="h-[19px]">
          <th className={head}>侧面通长筋</th>
          <th className={head}>侧面原位标注筋</th>
          <th className={head}>拉筋</th>
        </tr>
      </thead>
      <tbody className="font-['Liberation_Mono','Noto_Sans_CJK_SC',monospace] text-[10px]">
        <tr className="h-[19px] bg-[#a6c8f0]">
          <th className="border-b border-[#d8d8d8] bg-[#fccf8b] p-0 text-center font-normal">1</th>
          <td className="relative bg-[#8fbcea] p-0 pl-1 outline-3 -outline-offset-2 outline-black">
            1
            <span className="absolute -right-0.5 -bottom-0.5 size-1 border-t border-l border-white bg-black" />
          </td>
          {cells.map((value, i) => (
            <td key={i} className="overflow-hidden border-r border-[#9dbbe2] p-0 pl-0.5 whitespace-nowrap">{value}</td>
          ))}
        </tr>
      </tbody>
    </table>
  );
}

function FloatingWindow() {
  return (
    <div className="absolute top-[77px] right-1 w-[52px] bg-white shadow-[0_1px_5px_rgba(0,0,0,0.5)]">
      <div className="flex h-[25px] items-center justify-between pr-0.5 pl-[3px] text-[#9a9a9a]">
        <span>Poi...</span>
        <button type="button" aria-label="关闭" className="flex size-[18px] items-center justify-center bg-[#e3e3e3] text-[8px] text-[#f6f6f6]">✕</button>
      </div>
      <button type="button" className="h-[23px] w-full border border-t-[#666] border-r-2 border-b-2 border-[#666] bg-[#f0f0f0]">开始</button>
    </div>
  );
}

function Overflow() {
  return <button type="button" aria-label="更多" className="mb-2.5 shrink-0 text-base leading-4 font-semibold">»</button>;
}

export default function App() {
  return (
    <div className="relative flex h-screen flex-col overflow-hidden bg-[#f0f0f0] font-['Open_Sans','Noto_Sans_CJK_SC',sans-serif] text-xs leading-4 text-black">
      <div className="flex h-7 shrink-0 items-center pr-1 pl-0.5">
        <nav className="mr-1.5 flex shrink-0 gap-px">
          {menus.map((name) => (
            <button key={name} type="button" className="px-[5px] whitespace-nowrap">{name}</button>
          ))}
        </nav>
        <Toolbar grip={false} tools={[{ label: '新建变更', icon: 'newChange', split: true }, { label: '广小二', icon: 'mascot' }]} />
        <a href="#tip" className="ml-8 shrink-0 whitespace-nowrap text-[#7b3b0c]">如何处理筏板附加钢筋..</a>
        <div className="ml-8 flex shrink-0 items-center">
          <ToolItem tool={{ label: '13907298339', icon: 'user', split: true }} />
          <span className="px-1 whitespace-nowrap">造价豆:0</span>
          <button type="button" aria-label="通知" className="ml-1"><Icon name="bell" /></button>
        </div>
        <div className="ml-auto flex"><Overflow /></div>
      </div>

      <div className="flex h-8 shrink-0 items-center pr-1 pl-1">
        <div role="toolbar" className="flex h-[30px] w-[149px] shrink-0 items-center bg-linear-to-b from-[#fdfdfd] to-[#f1f1f1]">
          <button type="button" aria-label="新建" className="mr-2"><Icon name="file" /></button>
          <button type="button" aria-label="打开"><Icon name="open" /></button>
          <span className="flex w-5 justify-center"><Caret /></span>
          <button type="button" aria-label="保存" className="mr-1.5"><Icon name="save" /></button>
          <span className="mr-1.5 h-6 w-px bg-[#b9b9b9]" />
          <button type="button" aria-label="撤销"><Icon name="undo" /></button>
          <span className="flex w-5 justify-center"><Caret /></span>
          <div className="ml-auto flex pr-1"><Overflow /></div>
        </div>
        <Toolbar grip={false} dense tools={mainTools} />
        <div className="ml-[34px] flex shrink-0 pr-2"><Overflow /></div>
        <Toolbar grip={false} tools={viewTools} />
        <div className="ml-auto flex"><Overflow /></div>
      </div>

      <div className="flex min-h-0 flex-1">
        <NavPanel />
        <main className="flex min-w-0 flex-1 flex-col">
          <div className="flex h-[84px] shrink-0 flex-col justify-between pb-0.5 pl-1">
            <div className="flex items-center"><Toolbar tools={editTools} /></div>
            <div className="flex items-center gap-0.5">
              <Toolbar tools={memberTools}>
                <Combo label="楼层" value="首层" width="w-[60px]" />
                <Combo label="构件大类" value="梁" width="w-[72px]" />
                <Combo label="构件类型" value="梁" width="w-[72px]" />
                <Combo label="构件" value="KL-8" width="w-[72px]" />
                <Combo label="分层" value="分层1" width="w-[72px]" />
              </Toolbar>
              <Toolbar tools={axisTools} />
            </div>
            <div className="flex items-center">
              <Toolbar tools={drawTools} />
              <Combo label="画法" value="" width="w-[58px]" />
              <Toolbar grip={false} tools={beamTools} />
            </div>
          </div>

          <ModelCanvas />

          <div className="flex h-8 shrink-0 items-start gap-1 pt-0.5 pl-1">
            <Toolbar tools={snapModes} />
            <Toolbar tools={snapPoints} />
          </div>

          <div className="flex min-h-0 flex-1">
            <div className="flex w-3 shrink-0 flex-col items-center">
              <button type="button" aria-label="关闭面板" className="flex size-2.5 items-center justify-center border border-[#5a3a3a]">
                <svg viewBox="0 0 8 8" className="size-2"><path d="m1 1 6 6M7 1 1 7" stroke="#402020" strokeWidth="1.500" /></svg>
              </button>
              <span className="mt-1 w-1.5 flex-1 border-x-2 border-dotted border-[#c0c0c0]" />
            </div>
            <section className="flex min-w-0 flex-1 flex-col">
              <div className="flex h-[26px] shrink-0 items-center bg-linear-to-b from-white to-[#f3f3f3] pl-px whitespace-nowrap">
                <ToolItem tool={{ label: '复制跨数据', icon: 'copyData' }} />
                <ToolItem tool={{ label: '粘贴跨数据', icon: 'paste', disabled: true }} />
                <button type="button" disabled className="px-[5px] text-[#8a8a8a]">输入当前列数据</button>
                <button type="button" disabled className="px-[5px] text-[#8a8a8a]">删除当前列数据</button>
                <button type="button" className="px-[5px]">页面设置</button>
                <button type="button" className="px-[5px]">调换起始跨</button>
                <button type="button" className="px-[5px]">悬臂钢筋代号</button>
              </div>
              <div className="min-h-0 flex-1 overflow-hidden border-t border-r border-l border-[#a0a0a0] bg-white">
                <SpanTable />
              </div>
            </section>
          </div>
        </main>
      </div>

      <svg viewBox="0 0 204 4" className="absolute top-0 left-[765px] h-1 w-[204px]" aria-hidden="true">
        <path d="M20 0h183v2.500H20z" fill="#fff" stroke="#a9bfd2" />
        <path d="M0 0h20c-5 2-12 3-18 2z" fill="#f04e23" />
      </svg>
      <FloatingWindow />
    </div>
  );
}
